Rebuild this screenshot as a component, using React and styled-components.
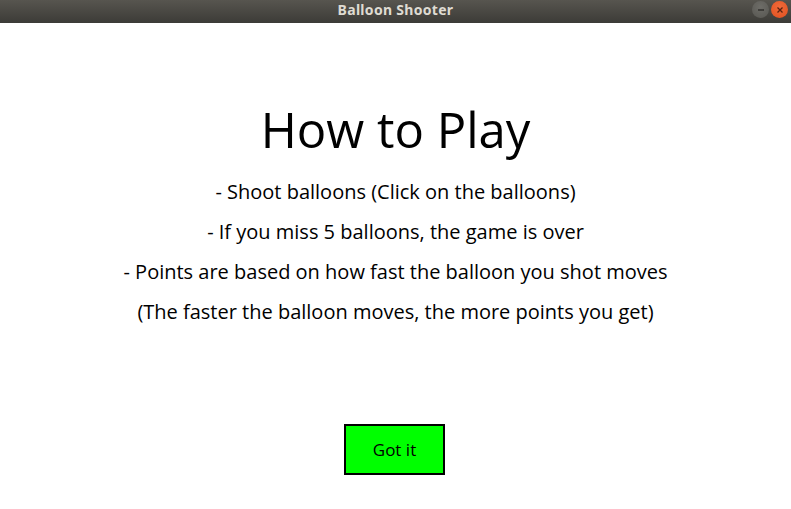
import React from "react";
import styled, {createGlobalStyle} from "styled-components";

const GlobalStyle = createGlobalStyle`
    html, body {
        margin: 0;
        padding: 0;
        background: #ffffff;
    }
    * {
        box-sizing: border-box;
    }
`

const rules = [
    "- Shoot balloons (Click on the balloons)",
    "- If you miss 5 balloons, the game is over",
    "- Points are based on how fast the balloon you shot moves",
    "(The faster the balloon moves, the more points you get)",
];

const App = () => {
    return (
        <Window>
            <GlobalStyle/>
            <TitleBar>
                <TitleText>Balloon Shooter</TitleText>
                <WindowControls>
                    <ControlButton kind="min">
                        <svg width="8" height="8" viewBox="0 0 8 8">
                            <path d="M1 4h6" stroke="#2e2d2a" strokeWidth="1.4"/>
                        </svg>
                    </ControlButton>
                    <ControlButton kind="close">
                        <svg width="8" height="8" viewBox="0 0 8 8">
                            <path d="M1.5 1.5l5 5M6.5 1.5l-5 5" stroke="#5a2210" strokeWidth="1.3"/>
                        </svg>
                    </ControlButton>
                </WindowControls>
            </TitleBar>
            <Content>
                <Heading>How to Play</Heading>
                <RuleList>
                    {rules.map((r) => (
                        <Rule key={r}>{r}</Rule>
                    ))}
                </RuleList>
                <GotItButton>Got it</GotItButton>
            </Content>
        </Window>
    )
}

const Window = styled.div`
    width: 791px;
    height: 509px;
    display: flex;
    flex-direction: column;
    background: #ffffff;
    overflow: hidden;
`

const TitleBar = styled.div`
    position: relative;
    height: 23px;
    flex-shrink: 0;
    display: flex;
    align-items: flex-start;
    justify-content: center;
    padding-top: 1px;
    background: linear-gradient(#57554f, #3c3b37);
`

const TitleText = styled.span`
    font-family: "Noto Sans", "DejaVu Sans", sans-serif;
    font-weight: 700;
    font-size: 14px;
    line-height: 18px;
    color: #dfdbd2;
    letter-spacing: 0.3px;
`

const WindowControls = styled.div`
    position: absolute;
    right: 3px;
    top: 1px;
    display: flex;
    gap: 2px;
`

const ControlButton = styled.div`
    width: 17px;
    height: 17px;
    border-radius: 50%;
    display: flex;
    align-items: center;
    justify-content: center;
    background: ${({kind}) => kind === "close"
        ? "radial-gradient(circle at 50% 35%, #f06a3a, #e0501f)"
        : "radial-gradient(circle at 50% 35%, #6e6d68, #575651)"};
`

const Content = styled.div`
    flex: 1;
    display: flex;
    flex-direction: column;
    align-items: center;
    padding-top: 78px;
    font-family: "Open Sans", "DejaVu Sans", sans-serif;
    color: #000000;
`

const Heading = styled.h1`
    margin: 0;
    font-size: 49px;
    font-weight: 400;
    line-height: 56px;
`

const RuleList = styled.div`
    margin-top: 15px;
    display: flex;
    flex-direction: column;
    align-items: center;
`

const Rule = styled.p`
    margin: 0;
    font-size: 20px;
    line-height: 40px;
`

const GotItButton = styled.button`
    margin-top: 92px;
    margin-right: 2px;
    width: 101px;
    height: 51px;
    background: #00ff00;
    border: 2px solid #000000;
    border-radius: 0;
    font-family: "Open Sans", "DejaVu Sans", sans-serif;
    font-size: 17px;
    color: #000000;
    padding: 0;
`

export default App;
